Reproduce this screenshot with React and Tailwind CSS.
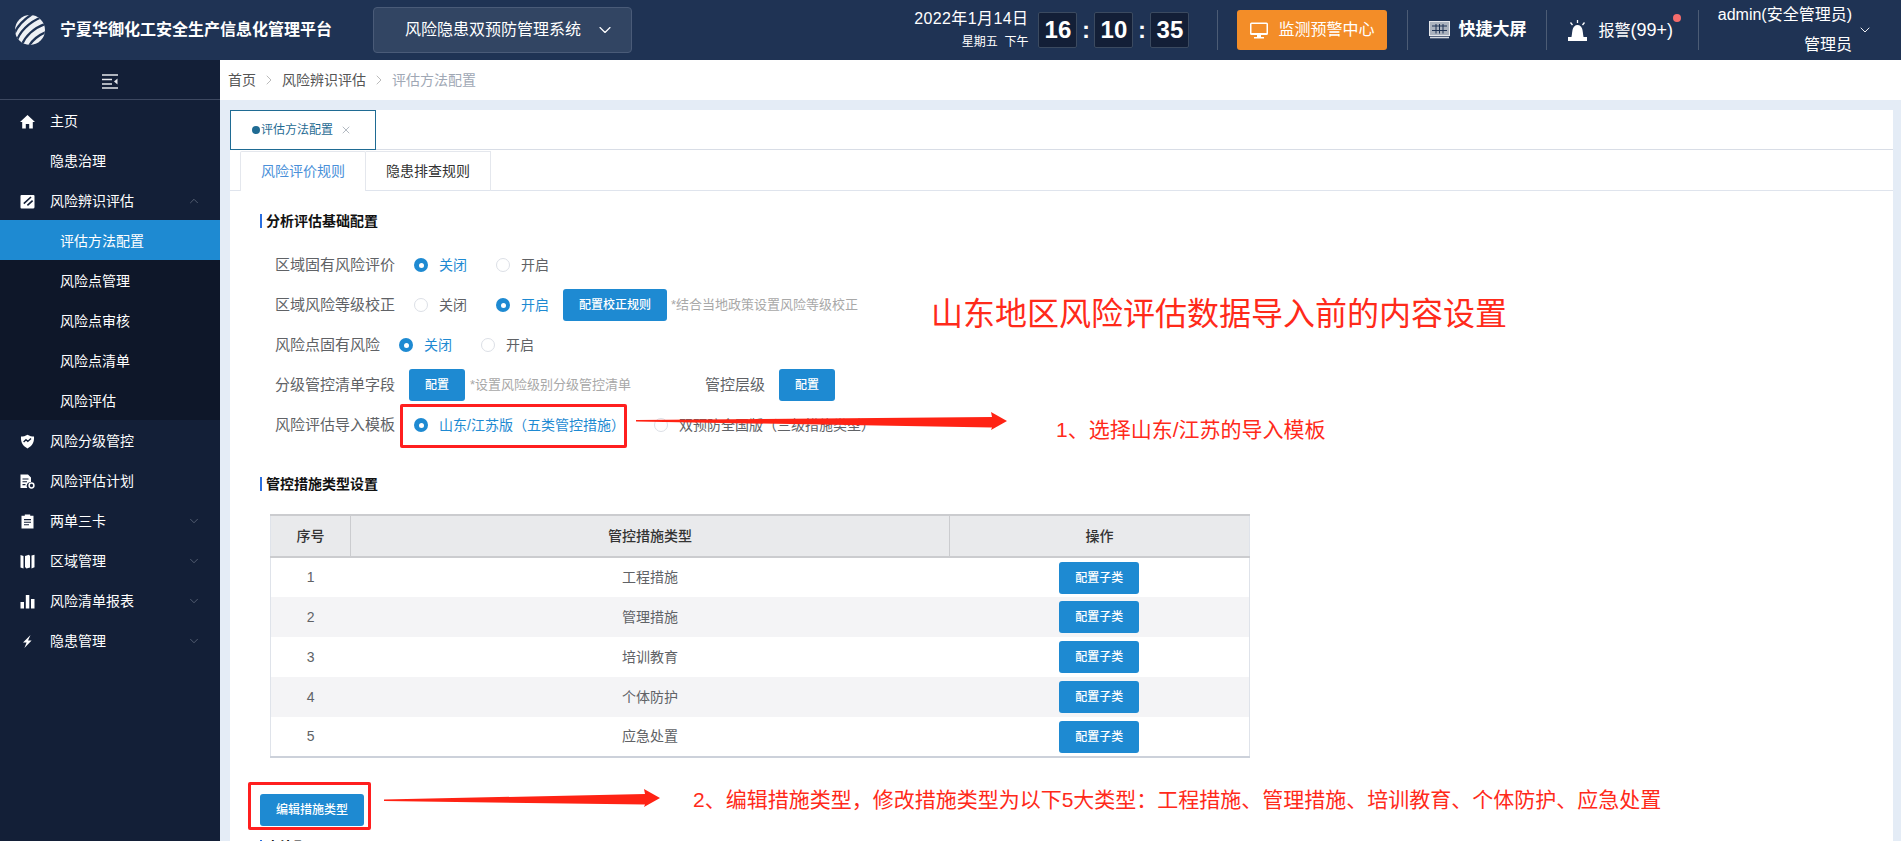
import React from 'react';
import { ChevronDown, ChevronUp, ChevronRight, X } from 'lucide-react';

const MENU_TOP = [
  { label: '主页', icon: 'home' },
  { label: '隐患治理' },
  { label: '风险辨识评估', icon: 'edit', arrow: 'up' },
];
const SUB_MENU = ['风险点管理', '风险点审核', '风险点清单', '风险评估'];
const MENU_BOTTOM = [
  { label: '风险分级管控', icon: 'shield' },
  { label: '风险评估计划', icon: 'doc' },
  { label: '两单三卡', icon: 'clip', arrow: 'down' },
  { label: '区域管理', icon: 'map', arrow: 'down' },
  { label: '风险清单报表', icon: 'bars', arrow: 'down' },
  { label: '隐患管理', icon: 'bolt', arrow: 'down' },
];
const MEASURES = ['工程措施', '管理措施', '培训教育', '个体防护', '应急处置'];

function MenuIcon({ name }) {
  const cls = 'w-[15px] h-[15px] fill-white';
  if (name === 'home') return <svg viewBox="0 0 15 15" className={cls}><path d="M7.5 1 L15 8 H12.8 V14.5 H9.2 V10 H5.8 V14.5 H2.2 V8 H0 Z" /></svg>;
  if (name === 'edit') return (
    <svg viewBox="0 0 15 15" className={cls}>
      <path d="M1.5 1 H13.5 Q14.5 1 14.5 2 V13 Q14.5 14.5 13 14.5 H1.5 Q0.5 14.5 0.5 13.5 V2 Q0.5 1 1.5 1 Z" />
      <path d="M3.8 9.6 L11 3 M7.4 11.4 L12.6 6.6" fill="none" stroke="#131f37" strokeWidth="1.6" />
    </svg>
  );
  if (name === 'shield') return (
    <svg viewBox="0 0 15 15" className={cls}>
      <path d="M7.5 0.8 C9.5 2.2 12 2.6 14 2.6 C14.4 8 12.5 12 7.5 14.4 C2.5 12 0.6 8 1 2.6 C3 2.6 5.5 2.2 7.5 0.8 Z" />
      <path d="M3.6 8 L6 5.8 L7.8 7.4 L11 4.4" fill="none" stroke="#131f37" strokeWidth="1.4" />
    </svg>
  );
  if (name === 'doc') return (
    <svg viewBox="0 0 15 15" className={cls}>
      <path d="M0.5 0.5 H8 L11 3.5 V8 A4 4 0 0 0 7.2 14 H0.5 Z" />
      <path d="M2.5 5 H8.5 M2.5 7.8 H7 M2.5 10.6 H5.5" stroke="#131f37" strokeWidth="1.1" />
      <circle cx="11.5" cy="11.5" r="2.4" fill="none" stroke="#fff" strokeWidth="1.5" />
    </svg>
  );
  if (name === 'clip') return (
    <svg viewBox="0 0 15 15" className={cls}>
      <path d="M1.5 1.8 H4.8 V0.5 H10.2 V1.8 H13.5 V14.5 H1.5 Z" />
      <path d="M4 5.6 H11 M4 8.2 H11 M4 10.8 H9" stroke="#131f37" strokeWidth="1.1" />
    </svg>
  );
  if (name === 'map') return (
    <svg viewBox="0 0 15 15" className={cls}>
      <path d="M0.5 1 L3.5 2 V14.5 L0.5 13.5 Z M5 2 L9 0.8 L10 2 V13.5 L6.5 14.5 L5 13 Z M11.5 1.5 L14.5 0.8 V13.2 L11.5 14.5 Z" />
    </svg>
  );
  if (name === 'bars') return (
    <svg viewBox="0 0 15 15" className={cls}>
      <path d="M0.5 8 H4 V14.5 H0.5 Z M5.8 1 H9.3 V14.5 H5.8 Z M11 5 H14.5 V14.5 H11 Z" />
    </svg>
  );
  if (name === 'bolt') return <svg viewBox="0 0 15 15" className={cls}><path d="M10.5 1 L3 8.4 H6.6 L4.4 14 L11.6 6.6 H8 Z" /></svg>;
  return <span className="w-[15px] h-[15px]" />;
}

function MenuItem({ item }) {
  return (
    <div className="h-10 flex items-center pl-[20px] pr-[19px] pt-[2px] text-[14px] text-white">
      <span className="w-[15px] flex justify-center"><MenuIcon name={item.icon} /></span>
      <span className="ml-[15px] flex-1">{item.label}</span>
      {item.arrow === 'up' && <ChevronUp size={14} strokeWidth={1} className="text-[#7d8798]" />}
      {item.arrow === 'down' && <ChevronDown size={14} strokeWidth={1} className="text-[#7d8798]" />}
    </div>
  );
}

function Sidebar() {
  return (
    <aside className="w-[220px] shrink-0 bg-[#131f37]">
      <div className="h-10 pt-[3px] flex items-center justify-center border-b border-[#3d4860]">
        <svg viewBox="0 0 16 15" className="w-4 h-[15px]">
          <path d="M0 1 H16 M0 14 H16 M0 5.5 H10 M0 10 H10" stroke="#e5e7eb" strokeWidth="1.6" />
          <path d="M15.5 4.5 L12 7.5 L15.5 10.5 Z" fill="#e5e7eb" />
        </svg>
      </div>
      {MENU_TOP.map((item) => <MenuItem key={item.label} item={item} />)}
      <div className="h-10 flex items-center pl-[60px] pt-[2px] bg-[#1e8ad2] text-[14px] text-white">评估方法配置</div>
      <div className="bg-[#0e1729]">
        {SUB_MENU.map((label) => (
          <div key={label} className="h-10 flex items-center pl-[60px] pt-[2px] text-[14px] text-white">{label}</div>
        ))}
      </div>
      {MENU_BOTTOM.map((item) => <MenuItem key={item.label} item={item} />)}
    </aside>
  );
}

function Logo() {
  return (
    <svg viewBox="0 0 30 30" className="w-[30px] h-[30px]">
      <defs>
        <clipPath id="globe"><circle cx="15" cy="15" r="15" /></clipPath>
      </defs>
      <g clipPath="url(#globe)">
        <rect width="30" height="30" fill="#eef1f5" />
        <g fill="none" stroke="#1f3354" strokeWidth="2.3">
          <path d="M-2 22 C1 12 9 4 19 -2" />
          <path d="M1 28 C4 17 14 7 27 2" />
          <path d="M6 32 C9 22 19 12 33 8" />
          <path d="M13 33 C16 26 24 19 34 16" />
          <path d="M21 33 C24 29 29 26 34 24" />
        </g>
      </g>
    </svg>
  );
}

function ClockBox({ value }) {
  return (
    <span className="w-[39px] h-9 flex items-center justify-center bg-[#131f37] border border-[#3b4a60] rounded-[2px] text-[24px] font-bold text-white">
      {value}
    </span>
  );
}

function Divider({ className = '' }) {
  return <span className={`w-px h-10 bg-[#4c5c75] ${className}`} />;
}

function Header() {
  return (
    <header className="h-[60px] shrink-0 flex items-center bg-[#1f3354] text-white">
      <div className="ml-[15px]"><Logo /></div>
      <div className="ml-[15px] text-[16px] font-bold">宁夏华御化工安全生产信息化管理平台</div>
      <div className="ml-[41px] w-[259px] h-[46px] flex items-center pl-[31px] bg-[#324563] border border-[#4a5b78] rounded text-[16px]">
        风险隐患双预防管理系统
        <ChevronDown size={20} strokeWidth={1.4} className="ml-[14px]" />
      </div>
      <div className="ml-auto w-[120px] text-right">
        <div className="text-[16px] leading-5 tracking-[0.4px]">2022年1月14日</div>
        <div className="text-[12px] leading-5 mt-[3px]">星期五&nbsp;&nbsp;下午</div>
      </div>
      <div className="ml-[10px] flex items-center">
        <ClockBox value="16" />
        <span className="w-[17px] text-center text-[24px] font-bold">:</span>
        <ClockBox value="10" />
        <span className="w-[17px] text-center text-[24px] font-bold">:</span>
        <ClockBox value="35" />
      </div>
      <Divider className="ml-[28px]" />
      <button className="ml-[19px] w-[150px] h-10 flex items-center pl-[13px] bg-[#f38d28] rounded-[3px] text-[16px] text-white">
        <svg viewBox="0 0 18 17" className="w-[18px] h-[17px] fill-white mr-[10px]">
          <path d="M1.5 0.5 H16.5 Q18 0.5 18 2 V11.5 Q18 13 16.5 13 H1.5 Q0 13 0 11.5 V2 Q0 0.5 1.5 0.5 Z M1.5 2 V11 H16.5 V2 Z" fillRule="evenodd" />
          <path d="M7 13 H11 V15 H14 V16.5 H4 V15 H7 Z" />
        </svg>
        监测预警中心
      </button>
      <Divider className="ml-[20px]" />
      <svg viewBox="0 0 21 18" className="ml-[21px] w-[21px] h-[18px]">
        <rect x="0.5" y="0.5" width="20" height="14" fill="#aab2be" stroke="#e5e7eb" />
        <path d="M3 5 H18 M3 9.5 H18 M7 3 V12.5 M10.5 3 V12.5 M14 3 V12.5" stroke="#1f3354" strokeWidth="1" />
        <path d="M1 16.5 H20" stroke="#d5d9e0" strokeWidth="1.6" />
      </svg>
      <span className="ml-[8px] text-[17px] font-bold">快捷大屏</span>
      <Divider className="ml-[20px]" />
      <svg viewBox="0 0 21 21" className="ml-[20px] w-[21px] h-[21px] fill-white">
        <path d="M1 17 H20 V21 H1 Z" />
        <path d="M4.5 17 L5.5 10 C6 7 8 5 10.5 5 C13 5 15 7 15.5 10 L16.5 17 Z" />
        <path d="M10.5 0 V3 M3.5 2.5 L5.5 5 M17.5 2.5 L15.5 5" stroke="#fff" strokeWidth="1.3" />
      </svg>
      <span className="relative ml-[10px] text-[16px]">
        报警<span className="text-[18px]">(99+)</span>
        <span className="absolute -right-[8px] top-[-3px] w-2 h-2 rounded-full bg-[#f56c6c]" />
      </span>
      <Divider className="ml-[25px]" />
      <div className="ml-[16px] w-[137px] text-right text-[16px]">
        <div className="leading-[30px]">admin(安全管理员)</div>
        <div className="leading-[30px]">管理员</div>
      </div>
      <ChevronDown size={16} strokeWidth={1.4} className="ml-[5px] mr-[28px]" />
    </header>
  );
}

function Radio({ checked, label, className = '' }) {
  return (
    <span className={`flex items-center ${className}`}>
      {checked ? (
        <span className="w-[14px] h-[14px] rounded-full bg-[#1e8ad2] flex items-center justify-center">
          <span className="w-[5px] h-[5px] rounded-full bg-white" />
        </span>
      ) : (
        <span className="w-[14px] h-[14px] rounded-full border border-[#dcdfe6] bg-white" />
      )}
      <span className={`ml-[11px] text-[14px] ${checked ? 'text-[#1e8ad2]' : 'text-[#606266]'}`}>{label}</span>
    </span>
  );
}

function BlueButton({ children, className = '' }) {
  return (
    <button className={`h-8 flex items-center justify-center bg-[#1e8ad2] rounded-[3px] text-[12px] font-medium text-white ${className}`}>
      {children}
    </button>
  );
}

function SectionTitle({ children, className = '' }) {
  return (
    <div className={`ml-[30px] h-[14px] flex items-center border-l-[2px] border-[#2a6fe0] pl-[4px] text-[14px] font-bold text-[#111] ${className}`}>
      {children}
    </div>
  );
}

function FormRow({ children, className = 'h-10' }) {
  return <div className={`pl-[45px] flex items-center ${className}`}>{children}</div>;
}

function FormLabel({ children }) {
  return <span className="text-[15px] text-[#606266]">{children}</span>;
}

function MeasureTable() {
  return (
    <table className="ml-[40px] w-[980px] table-fixed border-collapse border-b-2 border-b-[#ccd1da] border-x border-x-[#dfe3ea] text-[14px] text-[#606266]">
      <thead>
        <tr className="h-[42px] bg-[#e9eaec] border-t-2 border-b-2 border-[#cbcccf] text-[#333]">
          <th className="w-[80px] font-medium border-r border-[#cbcccf]">序号</th>
          <th className="w-[599px] font-medium border-r border-[#cbcccf]">管控措施类型</th>
          <th className="font-medium">操作</th>
        </tr>
      </thead>
      <tbody>
        {MEASURES.map((name, i) => (
          <tr key={name} className={`h-10 text-center ${i % 2 === 1 ? 'bg-[#f4f4f6]' : 'bg-white'}`}>
            <td>{i + 1}</td>
            <td>{name}</td>
            <td><BlueButton className="w-20 mx-auto">配置子类</BlueButton></td>
          </tr>
        ))}
      </tbody>
    </table>
  );
}

function Arrow({ left, top, width, tailY }) {
  const d = `M0 ${tailY} L${width - 15} 5 L${width - 16} 0 L${width} 9 L${width - 16} 18 L${width - 15} 15.5 L0 ${tailY + 1.5} Z`;
  return (
    <svg viewBox={`0 0 ${width} 18`} className="absolute" style={{ left, top, width, height: 18 }}>
      <path d={d} fill="#ff2314" />
    </svg>
  );
}

function Annotations() {
  return (
    <>
      <div className="absolute left-[931px] top-[292px] text-[32px] leading-[44px] text-[#ff2a1a]">山东地区风险评估数据导入前的内容设置</div>
      <div className="absolute left-[400px] top-[404px] w-[227px] h-[44px] border-[3px] border-[#ff1f1f] rounded-[2px]" />
      <Arrow left={636} top={412} width={371} tailY={8} />
      <div className="absolute left-[1056px] top-[415px] text-[21px] leading-[30px] text-[#ff2a1a]">1、选择山东/江苏的导入模板</div>
      <div className="absolute left-[248px] top-[782px] w-[123px] h-[48px] border-[3px] border-[#ff1f1f] rounded-[2px]" />
      <Arrow left={384} top={789} width={276} tailY={10.5} />
      <div className="absolute left-[693px] top-[785px] text-[21px] leading-[30px] text-[#ff2a1a]">2、编辑措施类型，修改措施类型为以下5大类型：工程措施、管理措施、培训教育、个体防护、应急处置</div>
    </>
  );
}

export default function App() {
  return (
    <div
      className="relative h-[841px] overflow-hidden flex flex-col"
      style={{ fontFamily: '"Liberation Sans", "Noto Sans CJK SC", sans-serif' }}
    >
      <Header />
      <div className="flex flex-1 min-h-0">
        <Sidebar />
        <main className="flex-1 min-w-0 flex flex-col bg-[#e4ecf6]">
          <div className="h-10 shrink-0 flex items-center pl-[8px] bg-white text-[14px] text-[#555]">
            <span>首页</span>
            <ChevronRight size={16} strokeWidth={1} className="mx-[5px] text-[#999]" />
            <span>风险辨识评估</span>
            <ChevronRight size={16} strokeWidth={1} className="mx-[5px] text-[#999]" />
            <span className="text-[#a0a8b5]">评估方法配置</span>
          </div>

          <div className="flex-1 min-h-0 mt-[10px] ml-[10px] mr-[8px] flex flex-col">
            <div className="h-10 shrink-0 bg-white border-b border-[#d8dde6]">
              <div className="w-[146px] h-[40px] flex items-center pl-[21px] border border-[#1f6b93] text-[12px] text-[#1f6b93]">
                <span className="w-2 h-2 rounded-full bg-[#1f6b93]" />
                <span className="ml-[1px]">评估方法配置</span>
                <X size={12} strokeWidth={1.2} className="ml-[7px] text-[#7f8b99]" />
              </div>
            </div>

            <div className="flex-1 min-h-0 bg-white">
              <div className="h-10 mt-px flex pl-[10px] border-b border-[#dfe4ed]">
                <div className="w-[126px] h-10 flex items-center justify-center border-x border-t border-[#e4e7ed] bg-white text-[14px] text-[#4a90d9] rounded-t-[2px]">风险评价规则</div>
                <div className="w-[125px] h-10 flex items-center justify-center border-r border-t border-[#e4e7ed] text-[14px] text-[#333]">隐患排查规则</div>
              </div>

              <SectionTitle className="mt-[23px]">分析评估基础配置</SectionTitle>
              <div className="mt-[17px]">
                <FormRow>
                  <FormLabel>区域固有风险评价</FormLabel>
                  <Radio checked label="关闭" className="ml-[19px]" />
                  <Radio label="开启" className="ml-[29px]" />
                </FormRow>
                <FormRow>
                  <FormLabel>区域风险等级校正</FormLabel>
                  <Radio label="关闭" className="ml-[19px]" />
                  <Radio checked label="开启" className="ml-[29px]" />
                  <BlueButton className="ml-[14px] w-[104px]">配置校正规则</BlueButton>
                  <span className="ml-[4px] text-[13px] text-[#a8a8a8]">*结合当地政策设置风险等级校正</span>
                </FormRow>
                <FormRow>
                  <FormLabel>风险点固有风险</FormLabel>
                  <Radio checked label="关闭" className="ml-[19px]" />
                  <Radio label="开启" className="ml-[29px]" />
                </FormRow>
                <FormRow>
                  <FormLabel>分级管控清单字段</FormLabel>
                  <BlueButton className="ml-[14px] w-14">配置</BlueButton>
                  <span className="ml-[5px] text-[13px] text-[#a8a8a8]">*设置风险级别分级管控清单</span>
                  <span className="ml-[74px]"><FormLabel>管控层级</FormLabel></span>
                  <BlueButton className="ml-[14px] w-14">配置</BlueButton>
                </FormRow>
                <FormRow>
                  <FormLabel>风险评估导入模板</FormLabel>
                  <Radio checked label="山东/江苏版（五类管控措施）" className="ml-[19px]" />
                  <Radio label="双预防全国版（三级措施类型）" className="ml-[29px]" />
                </FormRow>
              </div>

              <SectionTitle className="mt-[32px]">管控措施类型设置</SectionTitle>
              <div className="mt-[23px]">
                <MeasureTable />
              </div>
              <BlueButton className="mt-[36px] ml-[30px] w-[104px]">编辑措施类型</BlueButton>
              <SectionTitle className="mt-[14px]">占比配置</SectionTitle>
            </div>
          </div>
        </main>
      </div>
      <Annotations />
    </div>
  );
}
